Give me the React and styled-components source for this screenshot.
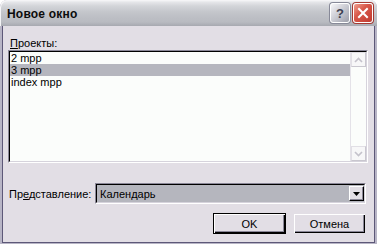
import React from "react";
import styled, { createGlobalStyle } from "styled-components";

const Global = createGlobalStyle`
  html, body { margin: 0; padding: 0; background: #ffffff; }
  body { width: 377px; height: 244px; overflow: hidden; font-family: "Liberation Sans", Arial, sans-serif; }
`;

const Win = styled.div`
  width: 377px;
  height: 244px;
  box-sizing: border-box;
  display: flex;
  flex-direction: column;
  background: #b8b5c6;
  border-radius: 7px 7px 0 0;
  overflow: hidden;
`;

const TitleBar = styled.div`
  height: 26px;
  flex: none;
  display: flex;
  align-items: center;
  padding: 0 4px 0 7px;
  background: linear-gradient(
    #fbfbfc 0px,
    #e6e7ea 2px,
    #d3d5d9 6px,
    #c4c6cb 12px,
    #bcbec4 18px,
    #b9bbc1 22px,
    #a7a9b0 26px
  );
  border-radius: 7px 7px 0 0;
  box-shadow: inset 1px 1px 0 #f4f4f6;
`;

const Title = styled.div`
  flex: 1;
  font-family: "Liberation Sans", Arial, sans-serif;
  font-weight: bold;
  font-size: 12px;
  color: #0c0c0c;
  letter-spacing: 0.2px;
  padding-top: 1px;
`;

const CapBtn = styled.div`
  width: 20px;
  height: 20px;
  box-sizing: border-box;
  border-radius: 3px;
  border: 1px solid ${(p) => (p.$close ? "#ffffff" : "#ffffff")};
  background: ${(p) =>
    p.$close
      ? "linear-gradient(135deg, #f0a090 0%, #d8584a 40%, #c03a30 100%)"
      : "linear-gradient(135deg, #f6f6f8 0%, #c9cad2 50%, #9c9eaa 100%)"};
  box-shadow: 0 0 0 1px ${(p) => (p.$close ? "#a53a33" : "#878998")};
  display: flex;
  align-items: center;
  justify-content: center;
  margin-left: ${(p) => (p.$close ? "3px" : "0")};
  color: #3d3f50;
  font-family: "Liberation Sans", Arial, sans-serif;
  font-size: 13px;
  font-weight: bold;
`;

const Body = styled.div`
  flex: 1;
  display: flex;
  flex-direction: column;
  background: #e2dee5;
  margin: 0 2px 2px 2px;
  border-left: 1px solid #5d5878;
  border-right: 1px solid #5d5878;
  border-bottom: 1px solid #5d5878;
  padding: 10px 6px 8px 5px;
`;

const Label = styled.div`
  font-size: 11px;
  line-height: 14px;
  color: #000;
  padding-left: 2px;
  height: 14px;
`;

const U = styled.span`
  text-decoration: underline;
  text-underline-offset: 1px;
`;

const ListBox = styled.div`
  height: 113px;
  box-sizing: border-box;
  display: flex;
  border-top: 1px solid #8a8797;
  border-left: 1px solid #8a8797;
  border-right: 1px solid #ffffff;
  border-bottom: 1px solid #ffffff;
  background: #fbfdfb;
`;

const ListInner = styled.div`
  flex: 1;
  display: flex;
  border-top: 1px solid #000;
  border-left: 1px solid #000;
  border-right: 1px solid #d6d3dc;
  border-bottom: 1px solid #d6d3dc;
`;

const Items = styled.div`
  flex: 1;
  display: flex;
  flex-direction: column;
`;

const Item = styled.div`
  height: 12px;
  line-height: 12px;
  font-size: 11px;
  padding-left: 1px;
  color: #000;
  background: ${(p) => (p.$sel ? "#b5b6be" : "transparent")};
`;

const ScrollBar = styled.div`
  width: 15px;
  display: flex;
  flex-direction: column;
  justify-content: space-between;
  border-left: 1px solid #e4e2e8;
  background: #fbfdfb;
`;

const ScrollBtn = styled.div`
  height: 15px;
  box-sizing: border-box;
  border: 1px solid #e1dfe5;
  border-right-color: #c9c7cf;
  border-bottom-color: #c9c7cf;
  background: #f7f7f8;
  display: flex;
  align-items: center;
  justify-content: center;
`;

const ViewRow = styled.div`
  margin-top: 20px;
  display: flex;
  align-items: center;
  height: 21px;
`;

const ViewLabel = styled.div`
  width: 86px;
  font-size: 11px;
  padding-left: 1px;
  color: #000;
`;

const Combo = styled.div`
  flex: 1;
  height: 21px;
  box-sizing: border-box;
  display: flex;
  border-top: 1px solid #8a8797;
  border-left: 1px solid #8a8797;
  border-right: 1px solid #ffffff;
  border-bottom: 1px solid #ffffff;
  margin-right: 2px;
`;

const ComboInner = styled.div`
  flex: 1;
  display: flex;
  align-items: center;
  border-top: 1px solid #000;
  border-left: 1px solid #000;
  border-right: 1px solid #d6d3dc;
  border-bottom: 1px solid #d6d3dc;
  background: #b5b6be;
`;

const ComboText = styled.div`
  flex: 1;
  font-size: 11px;
  padding-left: 3px;
  color: #000;
`;

const DropBtn = styled.div`
  width: 15px;
  height: 15px;
  box-sizing: border-box;
  align-self: center;
  background: #e2dee5;
  border-top: 1px solid #ffffff;
  border-left: 1px solid #ffffff;
  border-right: 1px solid #000;
  border-bottom: 1px solid #000;
  box-shadow: inset -1px -1px 0 #8a8797;
  display: flex;
  align-items: center;
  justify-content: center;
`;

const ButtonRow = styled.div`
  margin-top: 9px;
  display: flex;
  justify-content: flex-end;
  gap: 7px;
  padding-right: 2px;
`;

const Button = styled.div`
  width: 73px;
  height: 21px;
  box-sizing: border-box;
  display: flex;
  align-items: center;
  justify-content: center;
  font-size: 11px;
  color: #000;
  background: #e2dee5;
  border: 1px solid ${(p) => (p.$def ? "#000" : "transparent")};
  box-shadow: inset 1px 1px 0 #ffffff, inset -1px -1px 0 #000,
    inset -2px -2px 0 #8a8797;
`;

const Arrow = ({ dir, color }) => (
  <svg width="7" height="4" viewBox="0 0 7 4">
    {dir === "up" ? (
      <path d="M0 4 L3.5 0 L7 4 Z" fill={color} />
    ) : (
      <path d="M0 0 L7 0 L3.5 4 Z" fill={color} />
    )}
  </svg>
);

const ChevronUp = () => (
  <svg width="9" height="6" viewBox="0 0 9 6">
    <path d="M1 5 L4.5 1.5 L8 5" stroke="#c4c2cb" strokeWidth="1.6" fill="none" />
  </svg>
);
const ChevronDown = () => (
  <svg width="9" height="6" viewBox="0 0 9 6">
    <path d="M1 1 L4.5 4.5 L8 1" stroke="#c4c2cb" strokeWidth="1.6" fill="none" />
  </svg>
);

const CloseX = () => (
  <svg width="12" height="12" viewBox="0 0 12 12">
    <path d="M2 2 L10 10 M10 2 L2 10" stroke="#ffffff" strokeWidth="2" strokeLinecap="square" />
  </svg>
);

export default function App() {
  return (
    <>
      <Global />
      <Win>
        <TitleBar>
          <Title>Новое окно</Title>
          <CapBtn>?</CapBtn>
          <CapBtn $close>
            <CloseX />
          </CapBtn>
        </TitleBar>
        <Body>
          <Label>
            <U>П</U>роекты:
          </Label>
          <ListBox>
            <ListInner>
              <Items>
                <Item>2 mpp</Item>
                <Item $sel>3 mpp</Item>
                <Item>index mpp</Item>
              </Items>
              <ScrollBar>
                <ScrollBtn>
                  <ChevronUp />
                </ScrollBtn>
                <ScrollBtn>
                  <ChevronDown />
                </ScrollBtn>
              </ScrollBar>
            </ListInner>
          </ListBox>
          <ViewRow>
            <ViewLabel>
              Пр<U>е</U>дставление:
            </ViewLabel>
            <Combo>
              <ComboInner>
                <ComboText>Календарь</ComboText>
                <DropBtn>
                  <Arrow dir="down" color="#000" />
                </DropBtn>
              </ComboInner>
            </Combo>
          </ViewRow>
          <ButtonRow>
            <Button $def>OK</Button>
            <Button>Отмена</Button>
          </ButtonRow>
        </Body>
      </Win>
    </>
  );
}
